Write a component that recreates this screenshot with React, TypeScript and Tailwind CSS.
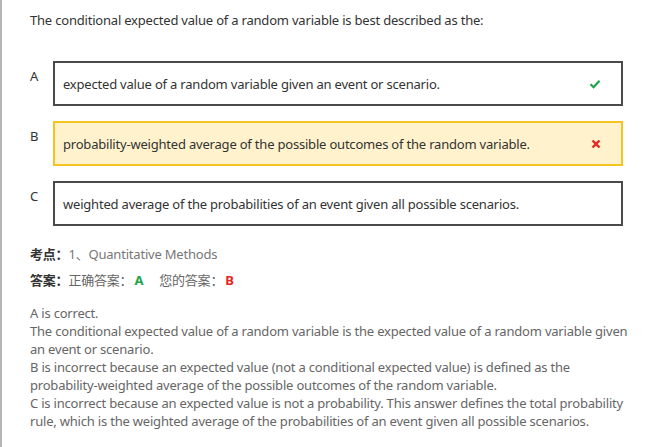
const font = { fontFamily: '"Noto Sans", "Noto Sans CJK SC", sans-serif' };

function Check() {
  return (
    <svg width="12" height="10" viewBox="0 0 12 10">
      <path d="M1.5 5.2 L4.6 8.2 L10.5 1.8" fill="none" stroke="#1aa34a" strokeWidth="2.2" />
    </svg>
  );
}

function Cross() {
  return (
    <svg width="10" height="10" viewBox="0 0 10 10">
      <path d="M1.5 1.5 L8.5 8.5 M8.5 1.5 L1.5 8.5" fill="none" stroke="#e8251f" strokeWidth="2.4" />
    </svg>
  );
}

const options = [
  { key: "A", text: "expected value of a random variable given an event or scenario.", mark: "right" },
  { key: "B", text: "probability-weighted average of the possible outcomes of the random variable.", mark: "wrong" },
  { key: "C", text: "weighted average of the probabilities of an event given all possible scenarios.", mark: "" },
];

const explanation = [
  "A is correct.",
  "The conditional expected value of a random variable is the expected value of a random variable given",
  "an event or scenario.",
  "B is incorrect because an expected value (not a conditional expected value) is defined as the",
  "probability-weighted average of the possible outcomes of the random variable.",
  "C is incorrect because an expected value is not a probability. This answer defines the total probability",
  "rule, which is the weighted average of the probabilities of an event given all possible scenarios.",
];

export default function App() {
  return (
    <div className="min-h-[447px] bg-white border-l-2 border-[#b5b5b5] pl-[28px] pt-[11px] text-[13px] leading-[18px] tracking-[-0.2px]" style={font}>
      <p className="text-[#333]">The conditional expected value of a random variable is best described as the:</p>

      <div className="mt-[32px] flex flex-col gap-[15px]">
        {options.map((o) => (
          <div key={o.key} className="flex">
            <div className="w-[23px] pt-[6px] text-[#333]">{o.key}</div>
            <div
              className={
                o.mark === "wrong"
                  ? "w-[570px] h-[45px] flex items-center justify-between pl-[8px] pr-[20px] border-2 border-[#f5c422] bg-[#fff2cc] text-[#333]"
                  : "w-[570px] h-[45px] flex items-center justify-between pl-[8px] pr-[20px] border-2 border-[#4a4a4a] bg-white text-[#333]"
              }
            >
              <span>{o.text}</span>
              {o.mark === "right" && <Check />}
              {o.mark === "wrong" && <Cross />}
            </div>
          </div>
        ))}
      </div>

      <div className="mt-[19px] flex items-center">
        <span className="font-bold text-[#333]">考点：</span>
        <span className="text-[#777]">1、Quantitative Methods</span>
      </div>
      <div className="mt-[8px] flex items-center">
        <span className="font-bold text-[#333]">答案：</span>
        <span className="text-[#666]">正确答案：</span>
        <span className="font-bold text-[#1aa34a] ml-[2px]">A</span>
        <span className="text-[#666] ml-[16px]">您的答案：</span>
        <span className="font-bold text-[#e8251f] ml-[2px]">B</span>
      </div>

      <div className="mt-[15px] text-[#666]">
        {explanation.map((l, i) => (
          <div key={i} className="whitespace-nowrap">{l}</div>
        ))}
      </div>
    </div>
  );
}
